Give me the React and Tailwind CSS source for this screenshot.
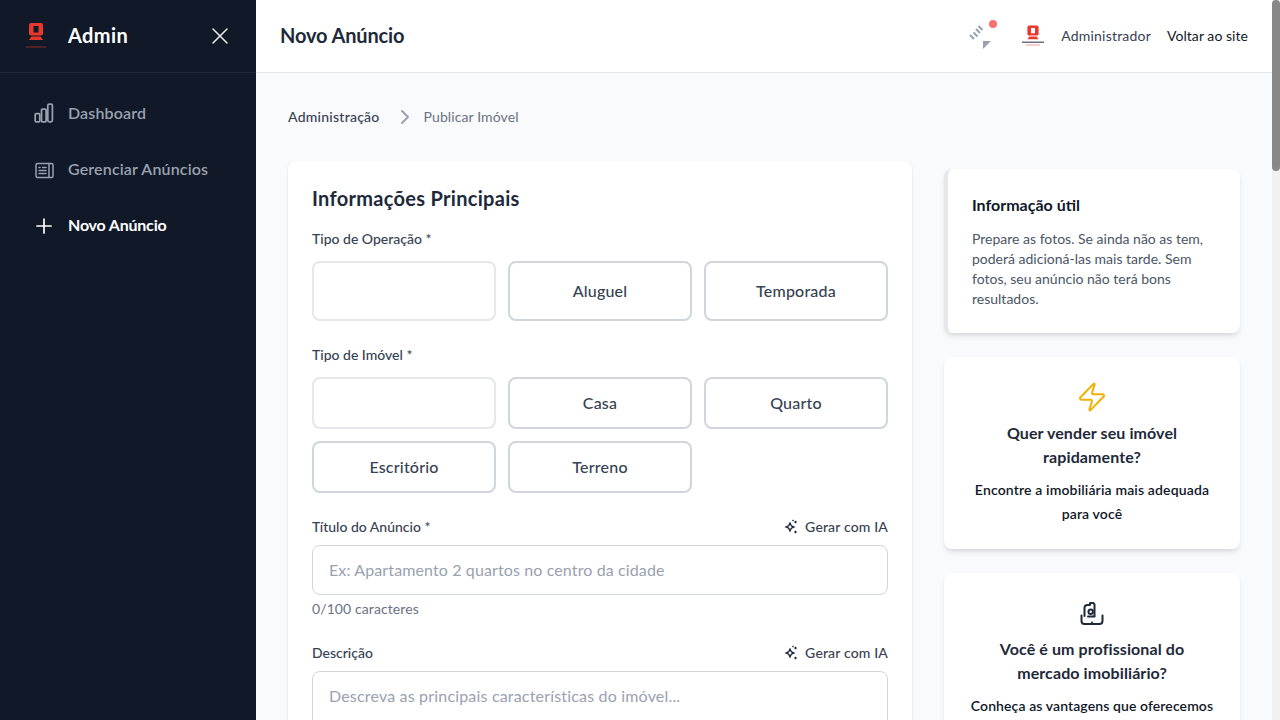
import React from "react";
import { X, Plus, ChevronRight, Zap } from "lucide-react";

const Logo = ({ small, className }) => (
  <svg viewBox="0 0 24 30" className={className}>
    <g transform={small ? "translate(2.4 3) scale(.8)" : undefined} fill="#e8392f">
      <path
        fillRule="evenodd"
        d="M7 2h10a2 2 0 0 1 2 2v8.500a2 2 0 0 1-2 2H7a2 2 0 0 1-2-2V4a2 2 0 0 1 2-2Zm2.500 3v6.500h5V5Z"
      />
      <path d="M7.500 15.500h9L19 19H5Z" />
    </g>
    {small ? (
      <>
        <rect x="1" y="20.500" width="22" height="1.500" fill="#6b7280" />
        <rect x="5" y="23.500" width="14" height="1" fill="#f4a09b" />
      </>
    ) : (
      <rect x="2" y="25.500" width="20" height="1" fill="#8a2a2a" />
    )}
  </svg>
);

const BarsIcon = ({ className }) => (
  <svg viewBox="0 0 24 24" className={className} fill="none" stroke="currentColor" strokeWidth="1.750" strokeLinejoin="round">
    <rect x="3.200" y="11.500" width="4.600" height="8.300" rx="1" />
    <rect x="9.500" y="7" width="4.600" height="12.800" rx="1" />
    <rect x="15.800" y="2" width="4.600" height="17.800" rx="1.500" />
  </svg>
);

const NewsIcon = ({ className }) => (
  <svg viewBox="0 0 24 24" className={className} fill="none" stroke="currentColor" strokeWidth="1.500" strokeLinecap="round" strokeLinejoin="round">
    <rect x="4" y="5.500" width="17" height="14" rx="1.500" />
    <path d="M17 5.500v14M7 9.500h1M10.500 9.500h3.500M7 12.500h7M7 15.500h7" />
  </svg>
);

const SparkIcon = () => (
  <svg viewBox="0 0 16 16" className="w-4 h-4 text-gray-800" fill="currentColor">
    <path fillRule="evenodd" d="M7 2.500 8.800 6.200 12.500 8 8.800 9.800 7 13.500 5.200 9.800 1.500 8 5.200 6.200ZM7 5.800 6.200 7.200 4.800 8 6.200 8.800 7 10.200 7.800 8.800 9.200 8 7.800 7.200Z" />
    <path d="M12.500 1.500 14 3l-1.500 1.500L11 3ZM12.500 11.500 14 13l-1.500 1.500L11 13ZM10 .500l1 1-1 1-1-1Z" />
  </svg>
);

const ProIcon = () => (
  <svg viewBox="0 0 24 24" className="w-6 h-6 overflow-visible text-gray-800" fill="none" stroke="currentColor" strokeWidth="2" strokeLinecap="round" strokeLinejoin="round">
    <path d="M4.500 15V7a3 3 0 0 1 3-3h2.500V2h2.500a2 2 0 0 1 2 2v11" />
    <path d="M8 15.500h6.500" />
    <circle cx="10.700" cy="10.700" r="2.200" />
    <path d="M1.500 14.500V20a3 3 0 0 0 3 3h15a3 3 0 0 0 3-3v-5.500" />
    <path d="M12 21.500V23" />
  </svg>
);

const LoadingIcon = () => (
  <svg viewBox="0 0 32 32" className="w-8 h-8 text-gray-400" fill="none" stroke="currentColor" strokeWidth="2">
    <path d="M1 15l4 4M4.500 12.500l4 4M7 9l4 4M9.500 6l4 4" />
    <path d="M14 21h8l-8 8Z" fill="currentColor" stroke="none" />
  </svg>
);

const OptionButton = ({ label, faded, tall }) => (
  <button
    className={`rounded-lg border-2 bg-white text-base font-medium tracking-[0.2px] text-gray-700 ${tall ? "h-[60px]" : "h-[52px]"} ${faded ? "border-gray-200" : "border-gray-300"}`}
  >
    {label}
  </button>
);

const FieldLabel = ({ children, withAi }) => (
  <div className="flex items-center justify-between mb-2">
    <label className="text-sm font-medium leading-5 text-gray-700">{children}</label>
    {withAi && (
      <span className="flex items-center gap-1.5 text-sm font-medium leading-5 tracking-[0.15px] text-gray-700">
        <SparkIcon />
        Gerar com IA
      </span>
    )}
  </div>
);

const navItems = [
  { label: "Dashboard", Icon: BarsIcon },
  { label: "Gerenciar Anúncios", Icon: NewsIcon },
  { label: "Novo Anúncio", Icon: Plus, active: true },
];

export default function App() {
  return (
    <div className="flex h-screen overflow-hidden bg-gray-50 font-[Lato,sans-serif]">
      <aside className="w-64 shrink-0 bg-[#111827]">
        <div className="flex h-[73px] items-center border-b border-gray-800 pl-6 pr-[22px]">
          <Logo className="w-6 h-[30px] mr-5" />
          <span className="pb-[2px] text-xl font-bold tracking-[0.4px] text-white">Admin</span>
          <X className="ml-auto w-7 h-7 text-gray-200" strokeWidth={1.300} />
        </div>
        <nav className="pt-[13px]">
          {navItems.map(({ label, Icon, active }) => (
            <a
              key={label}
              className={`flex items-center px-8 py-4 text-base ${active ? "font-bold tracking-[-0.2px] text-white" : "font-semibold tracking-[0.15px] text-gray-400"}`}
            >
              <Icon className="w-6 h-6 mr-3 shrink-0" strokeWidth={active ? 1.700 : undefined} />
              <span className="pb-[2px] leading-[22px]">{label}</span>
            </a>
          ))}
        </nav>
      </aside>

      <main className="min-w-0 flex-1 overflow-hidden">
        <header className="flex h-[73px] items-center justify-between border-b border-gray-200 bg-white px-6">
          <h1 className="pb-[2px] text-xl font-bold tracking-[-0.15px] text-gray-800">Novo Anúncio</h1>
          <div className="flex items-center gap-4">
            <div className="relative mr-1">
              <LoadingIcon />
              <span className="absolute right-1 top-0 h-2 w-2 rounded-full bg-[#f87171]" />
            </div>
            <Logo small className="w-6 h-[30px]" />
            <span className="text-sm tracking-[0.2px] text-gray-700">Administrador</span>
            <a className="text-sm tracking-[0.05px] text-gray-900">Voltar ao site</a>
          </div>
        </header>

        <div className="px-8 pt-8">
          <div className="flex items-center mb-8 leading-6 text-sm">
            <span className="font-medium tracking-[0.25px] text-gray-700">Administração</span>
            <ChevronRight className="w-6 h-6 ml-[13px] mr-[7px] text-gray-400" />
            <span className="tracking-[0.1px] text-gray-500">Publicar Imóvel</span>
          </div>

          <div className="flex items-start gap-8">
            <section className="w-[624px] rounded-lg bg-white p-6 shadow-sm">
              <h2 className="-mt-px mb-[17px] text-xl font-bold tracking-[0.3px] text-gray-800">Informações Principais</h2>

              <p className="mb-3 text-sm font-medium leading-5 text-gray-700">Tipo de Operação *</p>
              <div className="mb-6 grid grid-cols-3 gap-3">
                <OptionButton tall faded />
                <OptionButton tall label="Aluguel" />
                <OptionButton tall label="Temporada" />
              </div>

              <p className="mb-3 text-sm font-medium leading-5 text-gray-700">Tipo de Imóvel *</p>
              <div className="mb-6 grid grid-cols-3 gap-3">
                <OptionButton faded />
                <OptionButton label="Casa" />
                <OptionButton label="Quarto" />
                <OptionButton label="Escritório" />
                <OptionButton label="Terreno" />
              </div>

              <FieldLabel withAi>Título do Anúncio *</FieldLabel>
              <input
                readOnly
                placeholder="Ex: Apartamento 2 quartos no centro da cidade"
                className="block h-[50px] w-full rounded-lg border border-gray-300 px-4 pb-[2px] text-base tracking-[0.12px] placeholder:text-gray-400"
              />
              <p className="mt-1 mb-6 text-sm leading-5 tracking-[0.1px] text-gray-500">0/100 caracteres</p>

              <FieldLabel withAi>Descrição</FieldLabel>
              <textarea
                readOnly
                rows={5}
                placeholder="Descreva as principais características do imóvel..."
                className="block w-full resize-none rounded-lg border border-gray-300 px-4 py-3 text-base tracking-[0.18px] placeholder:text-gray-400"
              />
            </section>

            <aside className="mt-2 flex w-[296px] flex-col gap-6">
              <div className="rounded-lg border-l-4 border-gray-200 bg-white p-6 shadow-md">
                <h3 className="mb-3 text-base font-bold text-gray-900">Informação útil</h3>
                <p className="text-sm leading-5 text-gray-600">
                  Prepare as fotos. Se ainda não as tem, poderá adicioná-las mais tarde. Sem fotos, seu anúncio não terá bons resultados.
                </p>
              </div>

              <div className="flex flex-col items-center rounded-lg bg-white px-6 pt-6 pb-[23px] text-center shadow-md">
                <div className="mb-2 flex h-8 items-center">
                  <Zap className="w-8 h-8 text-yellow-500" strokeWidth={1.500} />
                </div>
                <h3 className="mb-[9px] text-base font-bold leading-6 tracking-[0.1px] text-gray-800">Quer vender seu imóvel rapidamente?</h3>
                <p className="text-sm font-semibold leading-6 tracking-[0.15px] text-gray-900">Encontre a imobiliária mais adequada para você</p>
              </div>

              <div className="flex flex-col items-center rounded-lg bg-white px-6 pt-6 pb-[23px] text-center shadow-md">
                <div className="mb-2 flex h-8 items-center">
                  <ProIcon />
                </div>
                <h3 className="mb-[9px] max-w-[210px] text-base font-bold leading-6 tracking-[0.1px] text-gray-800">Você é um profissional do mercado imobiliário?</h3>
                <p className="text-sm font-semibold leading-6 tracking-[0.1px] text-gray-900">Conheça as vantagens que oferecemos</p>
              </div>
            </aside>
          </div>
        </div>
      </main>

      <div className="w-2 shrink-0 bg-[#f1f1f1]">
        <div className="h-[171px] rounded bg-[#888888]" />
      </div>
    </div>
  );
}
